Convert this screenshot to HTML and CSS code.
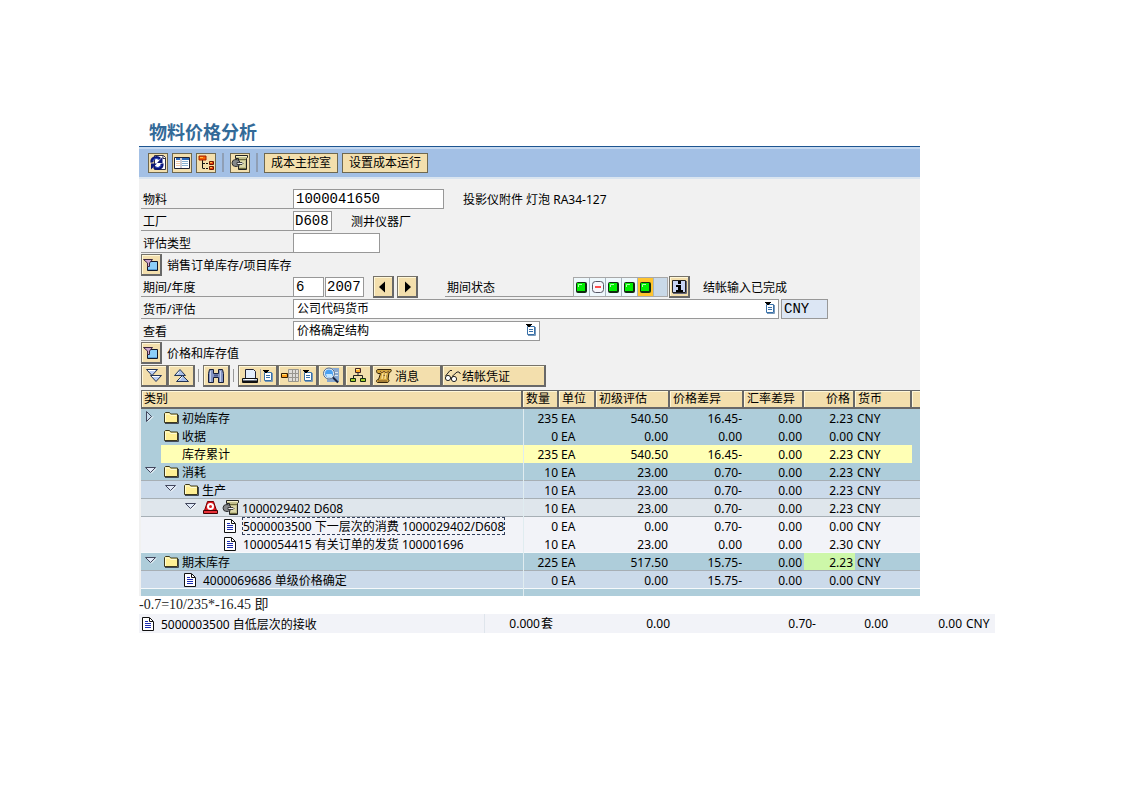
FILE: index.html
```html
<!DOCTYPE html>
<html lang="zh-CN">
<head>
<meta charset="utf-8">
<title>物料价格分析</title>
<link rel="stylesheet" href="styles.css">
</head>
<body>
<svg class="sprite" aria-hidden="true">
  <symbol id="refresh" viewBox="0 0 18 18"><path d="M5.500 1.500h9l2 2v12h-11z" fill="#fff" stroke="#334"/><path d="M14 2v2.500h2" fill="none" stroke="#334"/><path d="M3 8.500C2 4 8 2 11 5" fill="none" stroke="#0a1678" stroke-width="3"/><path d="M13.500 3v6H8z" fill="#0a1678"/><path d="M13 9.500c1 4.500-5 6.500-8 3.500" fill="none" stroke="#0a1678" stroke-width="3"/><path d="M2 15.500v-6h6z" fill="#0a1678"/><path d="M4 7c1-3 4-3 6-1.500M12 11c-1 3-4 3-6 1.500" fill="none" stroke="#4868e0"/></symbol>
  <symbol id="layout" viewBox="0 0 18 18"><path d="M1.500 3.500h15v11h-15z" fill="#fff" stroke="#223"/><path d="M3 5h4M9 5h7" stroke="#2a68b8" stroke-width="2"/><path d="M8 4v10" stroke="#99a"/><path d="M3 7.500h4M3 9.500h4M3 11.500h4" stroke="#f0c8a8"/><path d="M9 7.500h6M9 9.500h6M9 11.500h6" stroke="#8ab0d0"/></symbol>
  <symbol id="tree" viewBox="0 0 18 18"><path d="M5.500 5v9.500" stroke="#111"/><path d="M6 9.500h6M6 14.500h6" stroke="#111" stroke-dasharray="2 1"/><path d="M2 2h7v4H2z" fill="#f86000" stroke="#a02000"/><path d="M12.500 7.500h4v3h-4zM12.500 12.500h4v3h-4z" fill="#e83810" stroke="#701800"/><path d="M3 3.500h3M13 8.500h2M13 13.500h2" stroke="#ffc040"/></symbol>
  <symbol id="machine" viewBox="0 0 18 18"><path d="M4.500 1.500h12v2l-1 1v11h-8v-11h-3z" fill="#c4c08c" stroke="#222"/><path d="M5 2.500h11" stroke="#f4f0c8"/><path d="M8 5.500h7M8 14.500h7" stroke="#6c6a3c"/><path d="M9 7h5v6H9z" fill="#dcd8a8"/><ellipse cx="5" cy="9" rx="4" ry="3.500" fill="#b8bcc0" stroke="#222"/><path d="M3 6.500v5M5 6v6M7 6.500v5" stroke="#555"/><path d="M6 8.500h5l1 1-1 1H6z" fill="#f4f4f4" stroke="#222" stroke-width=".8"/></symbol>
  <symbol id="filter" viewBox="0 0 18 18"><path d="M5.500 5.500h10v9h-10z" fill="#8ccef8" stroke="#10182c"/><path d="M6 13.500h9" stroke="#5aa0d8"/><path d="M1.500 3.500h9L7.500 7v3.500h-2V7z" fill="#d0a8d0" stroke="#3b253e"/></symbol>
  <symbol id="prev" viewBox="0 0 18 18"><path d="M11 3.500v11L5 9z" fill="#000"/></symbol>
  <symbol id="next" viewBox="0 0 18 18"><path d="M7 3.500v11L13 9z" fill="#000"/></symbol>
  <symbol id="info" viewBox="0 0 18 18"><path d="M2.500 2.500h13v12h-13z" fill="#c8d5f6" stroke="#222"/><path d="M3 15.500h13.500V3" fill="none" stroke="#667"/><path d="M8 3h3v3H8zM6 7h5v5h2v2H6v-2h2V9H6z" fill="#000"/></symbol>
  <symbol id="list" viewBox="0 0 12 14"><path d="M2.500 3.500h7v8h-7z" fill="#fff" stroke="#3870a8"/><path d="M10.500 4v8.500H3" fill="none" stroke="#7898b8"/><path d="M4 6.500h4M4 8.500h4" stroke="#3870a8"/><path d="M1 1h6v1H6v1H5v1H3V3H2V2H1z" fill="#000"/></symbol>
  <symbol id="down2" viewBox="0 0 18 18"><path d="M1.500 2.500h11l-5.500 6zM5.500 8.500h11l-5.500 6z" fill="#b8ccf4" stroke="#223355"/><path d="M3 3.500h7M7 9.500h7" stroke="#fff"/></symbol>
  <symbol id="up2" viewBox="0 0 18 18"><path d="M2.500 8.500h11l-5.500-6zM4.500 14.500h12l-6-6z" fill="#a8bee8" stroke="#223355"/><path d="M7 5l-2 2.500M10 10l-3 3.500" stroke="#fff"/></symbol>
  <symbol id="find" viewBox="0 0 18 18"><path d="M1.500 15.500v-9l1-4h4v4h5v-4h4l1 4v9h-5v-5h-5v5z" fill="#8494c4" stroke="#151c38"/><path d="M3.500 4v11M13.500 4v11" stroke="#c8d4ec"/><path d="M7 8.500h4" stroke="#505c88" stroke-width="2"/></symbol>
  <symbol id="print" viewBox="0 0 18 18"><path d="M4.500 2.500h8l2 2v7h-10z" fill="#e4eefc" stroke="#223"/><path d="M1.500 11.500h15v4h-15z" fill="#c8d8f0" stroke="#111"/><path d="M2 14.500h14" stroke="#111" stroke-width="2"/><path d="M4 12.500h9" stroke="#fff"/></symbol>
  <symbol id="grid" viewBox="0 0 18 18"><path d="M7.500 2.500h10v12h-10zM8 6.500h9M8 10.500h9M11.500 3v12M14.500 3v12" fill="#dedcd8" stroke="#98968f"/><path d="M.5 6.500h6v4h-6z" fill="#ffa01e" stroke="#331c00"/><path d="M1 7.500h4" stroke="#ffe070"/></symbol>
  <symbol id="detail" viewBox="0 0 18 18"><path d="M5 1h12v14H5z" fill="#88a8d0"/><path d="M12 5.500h4M12 8.500h4" stroke="#dce8f4"/><circle cx="7" cy="6.500" r="5" fill="#4aa0f0" stroke="#e8f0f8" stroke-width="2"/><circle cx="7" cy="6.500" r="5.500" fill="none" stroke="#304868" stroke-width=".8"/><path d="M4 7h6v3H5z" fill="#c8e8ff"/><path d="M11 10.500l5 5" stroke="#182440" stroke-width="2"/></symbol>
  <symbol id="hier" viewBox="0 0 18 18"><path d="M9 5v4M4.500 12V8.500h9V12" fill="none" stroke="#222"/><path d="M6.500 1.500h5v4h-5z" fill="#ffad28" stroke="#422"/><path d="M1.500 11.500h5v3h-5zM11.500 11.500h5v3h-5z" fill="#a2d030" stroke="#132b12"/><path d="M7 2.500h3" stroke="#fff0a0"/></symbol>
  <symbol id="message" viewBox="0 0 18 18"><path d="M3 2.500h13c1 2-1 3-2 3l-1 7c2 0 1 3-1 3H2.500c-2-1-1-3 1-3l2-6H3c-2-1-2-4 0-4z" fill="#d5a840" stroke="#33240b"/><path d="M5 4l2 2 2-2 2 2 3-2M7 8l5 1M3 14h9" fill="none" stroke="#79542b"/><path d="M8 6l-1 6M11 6l-1 6" stroke="#f8df94" stroke-width="1.500"/></symbol>
  <symbol id="glasses" viewBox="0 0 18 18"><circle cx="4" cy="11" r="2.600" fill="#fff" stroke="#222"/><circle cx="10" cy="12" r="2.600" fill="#fff" stroke="#222"/><path d="M1.500 9L6 3.500h2M6.500 11l1-1M8 9.500l5-4.500h2l1.500 2" fill="none" stroke="#222"/></symbol>
  <symbol id="folder" viewBox="0 0 18 18"><path d="M3 14.500h13.500V6" fill="none" stroke="#404858"/><path d="M2.500 13.500v-9l1-1h4l1 1.500h7v8.500z" fill="#ffef94" stroke="#3c381c"/><path d="M3.500 13V5h4l1 1.500h6" fill="none" stroke="#fffcd4"/></symbol>
  <symbol id="doc" viewBox="0 0 18 18"><path d="M2.500 2.500h7l4 4v9h-11z" fill="#fff" stroke="#111"/><path d="M9.500 3v3.500H13" fill="none" stroke="#111"/><path d="M5 6.500h3M5 8.500h6M5 10.500h6M5 12.500h6" stroke="#1d2cb0"/></symbol>
  <symbol id="alarm" viewBox="0 0 18 18"><path d="M5.500 2.500h6l3 9h-12z" fill="#e01820" stroke="#700"/><path d="M1.500 11.500h14v3h-14z" fill="#e83038" stroke="#400"/><circle cx="8.500" cy="7.500" r="2.500" fill="#d22" stroke="#fff" stroke-width="2"/></symbol>
  <symbol id="open" viewBox="0 0 12 12"><path d="M.5 2.500h10l-5 5z" fill="#e0eaf8" stroke="#42465c"/><path d="M6 8.500l5-5" stroke="#fff"/></symbol>
  <symbol id="closed" viewBox="0 0 12 12"><path d="M1.500.5v10l5-5z" fill="#c7ddec" stroke="#42465c"/><path d="M3 10.500l5-5" stroke="#fff"/></symbol>
  <symbol id="green" viewBox="0 0 14 18"><rect x="1" y="4" width="11" height="11" rx="2" fill="#102b10"/><rect x="2" y="5" width="8" height="8" fill="#00f000"/><path d="M3.500 9V6.500H7" fill="none" stroke="#adffad"/></symbol>
  <symbol id="minus" viewBox="0 0 14 18"><rect x="1.500" y="3.500" width="11" height="11" rx="3" fill="#f7f7fc" stroke="#555664"/><path d="M4 9h6" stroke="#ff4c4c" stroke-width="2"/></symbol>
</svg>

<main class="document">
  <section class="app">
    <h1 class="title">物料价格分析</h1>
    <div class="appbar">
      <button class="flat" aria-label="刷新"><svg><use href="#refresh"/></svg></button>
      <button class="flat" aria-label="布局"><svg><use href="#layout"/></svg></button>
      <button class="flat" aria-label="层次"><svg><use href="#tree"/></svg></button>
      <span class="bar-sep"></span>
      <button class="flat" aria-label="物料"><svg><use href="#machine"/></svg></button>
      <span class="bar-sep"></span>
      <button class="flat text">成本主控室</button>
      <button class="flat text">设置成本运行</button>
    </div>

    <form class="form">
      <div class="row">
        <label class="label" for="material">物料</label>
        <input class="field w-material" id="material" value="1000041650">
        <span class="note">投影仪附件 灯泡 RA34-127</span>
      </div>
      <div class="row">
        <label class="label" for="plant">工厂</label>
        <input class="field w-code" id="plant" value="D608">
        <span class="note">测井仪器厂</span>
      </div>
      <div class="row">
        <label class="label" for="valtype">评估类型</label>
        <input class="field w-type" id="valtype" value="">
      </div>
      <div class="row">
        <button type="button" class="raised square" aria-label="销售订单库存/项目库存"><svg><use href="#filter"/></svg></button>
        <span class="caption">销售订单库存/项目库存</span>
      </div>
      <div class="row">
        <label class="label" for="period">期间/年度</label>
        <input class="field w-period" id="period" value="6">
        <input class="field w-code year" aria-label="年度" value="2007">
        <span class="pager">
          <button type="button" class="raised square" aria-label="上一期间"><svg><use href="#prev"/></svg></button>
          <button type="button" class="raised square" aria-label="下一期间"><svg><use href="#next"/></svg></button>
        </span>
        <span class="label status-label">期间状态</span>
        <span class="status">
          <span class="lamp"><svg><use href="#green"/></svg></span>
          <span class="lamp"><svg><use href="#minus"/></svg></span>
          <span class="lamp"><svg><use href="#green"/></svg></span>
          <span class="lamp"><svg><use href="#green"/></svg></span>
          <span class="lamp current"><svg><use href="#green"/></svg></span>
        </span>
        <button type="button" class="raised square" aria-label="信息"><svg><use href="#info"/></svg></button>
        <span class="status-text">结帐输入已完成</span>
      </div>
      <div class="row">
        <label class="label" for="currency">货币/评估</label>
        <span class="picker wide"><select id="currency"><option>公司代码货币</option></select><svg><use href="#list"/></svg></span>
        <input class="field readonly" aria-label="货币" value="CNY" readonly>
      </div>
      <div class="row">
        <label class="label" for="view">查看</label>
        <span class="picker view"><select id="view"><option>价格确定结构</option></select><svg><use href="#list"/></svg></span>
      </div>
      <div class="row">
        <button type="button" class="raised square" aria-label="价格和库存值"><svg><use href="#filter"/></svg></button>
        <span class="caption">价格和库存值</span>
      </div>
    </form>

    <div class="tools">
      <button class="raised tool" aria-label="展开"><svg><use href="#down2"/></svg></button>
      <button class="raised tool" aria-label="折叠"><svg><use href="#up2"/></svg></button>
      <span class="tool-sep"></span>
      <button class="raised tool" aria-label="查找"><svg><use href="#find"/></svg></button>
      <span class="tool-sep"></span>
      <button class="raised menu" aria-label="打印"><svg><use href="#print"/></svg><i></i><svg class="small"><use href="#list"/></svg></button>
      <button class="raised menu" aria-label="列格式"><svg><use href="#grid"/></svg><i></i><svg class="small"><use href="#list"/></svg></button>
      <button class="raised tool" aria-label="明细"><svg><use href="#detail"/></svg></button>
      <button class="raised tool" aria-label="层次结构"><svg><use href="#hier"/></svg></button>
      <button class="raised worded message"><svg><use href="#message"/></svg><span>消息</span></button>
      <button class="raised worded voucher"><svg><use href="#glasses"/></svg><span>结帐凭证</span></button>
    </div>

    <table class="grid">
      <colgroup><col><col class="c-qty"><col class="c-unit"><col class="c-amount"><col class="c-amount"><col class="c-fx"><col class="c-price"><col class="c-cur"><col class="c-end"></colgroup>
      <thead>
        <tr><th>类别</th><th>数量</th><th>单位</th><th>初级评估</th><th>价格差异</th><th>汇率差异</th><th class="right">价格</th><th>货币</th><th></th></tr>
      </thead>
      <tbody>
        <tr class="teal"><td><div class="node"><svg class="arrow"><use href="#closed"/></svg><svg><use href="#folder"/></svg><span>初始库存</span></div></td><td>235</td><td>EA</td><td>540.50</td><td>16.45-</td><td>0.00</td><td>2.23</td><td>CNY</td><td></td></tr>
        <tr class="teal"><td><div class="node"><span class="arrow"></span><svg><use href="#folder"/></svg><span>收据</span></div></td><td>0</td><td>EA</td><td>0.00</td><td>0.00</td><td>0.00</td><td>0.00</td><td>CNY</td><td></td></tr>
        <tr class="teal total"><td><div class="node"><span>库存累计</span></div></td><td>235</td><td>EA</td><td>540.50</td><td>16.45-</td><td>0.00</td><td>2.23</td><td>CNY</td><td></td></tr>
        <tr class="teal ruled"><td><div class="node"><svg class="arrow"><use href="#open"/></svg><svg><use href="#folder"/></svg><span>消耗</span></div></td><td>10</td><td>EA</td><td>23.00</td><td>0.70-</td><td>0.00</td><td>2.23</td><td>CNY</td><td></td></tr>
        <tr class="blue ruled"><td><div class="node level1"><svg class="arrow"><use href="#open"/></svg><svg><use href="#folder"/></svg><span>生产</span></div></td><td>10</td><td>EA</td><td>23.00</td><td>0.70-</td><td>0.00</td><td>2.23</td><td>CNY</td><td></td></tr>
        <tr class="grey ruled"><td><div class="node level2"><svg class="arrow"><use href="#open"/></svg><svg><use href="#alarm"/></svg><svg><use href="#machine"/></svg><span>1000029402 D608</span></div></td><td>10</td><td>EA</td><td>23.00</td><td>0.70-</td><td>0.00</td><td>2.23</td><td>CNY</td><td></td></tr>
        <tr class="pale"><td><div class="node level3"><span class="arrow"></span><svg><use href="#doc"/></svg><span class="item focus">5000003500 下一层次的消费 1000029402/D608</span></div></td><td>0</td><td>EA</td><td>0.00</td><td>0.70-</td><td>0.00</td><td>0.00</td><td>CNY</td><td></td></tr>
        <tr class="pale lined"><td><div class="node level3"><span class="arrow"></span><svg><use href="#doc"/></svg><span class="item">1000054415 有关订单的发货 100001696</span></div></td><td>10</td><td>EA</td><td>23.00</td><td>0.00</td><td>0.00</td><td>2.30</td><td>CNY</td><td></td></tr>
        <tr class="teal ruled"><td><div class="node"><svg class="arrow"><use href="#open"/></svg><svg><use href="#folder"/></svg><span>期末库存</span></div></td><td>225</td><td>EA</td><td>517.50</td><td>15.75-</td><td>0.00</td><td class="good">2.23</td><td>CNY</td><td></td></tr>
        <tr class="blue lined"><td><div class="node level1"><span class="arrow"></span><svg><use href="#doc"/></svg><span class="item">4000069686 单级价格确定</span></div></td><td>0</td><td>EA</td><td>0.00</td><td>15.75-</td><td>0.00</td><td>0.00</td><td>CNY</td><td></td></tr>
        <tr class="teal tail"><td></td><td></td><td></td><td></td><td></td><td></td><td></td><td></td><td></td></tr>
      </tbody>
    </table>
  </section>

  <p class="formula">-0.7=10/235*-16.45 即</p>

  <table class="strip">
    <colgroup><col><col class="s-qty"><col class="s-unit"><col class="s-first"><col class="s-diff"><col class="s-fx"><col class="s-price"><col class="s-cur"></colgroup>
    <tbody>
      <tr><td><div class="node"><svg><use href="#doc"/></svg><span class="item">5000003500 自低层次的接收</span></div></td><td>0.000</td><td class="left">套</td><td>0.00</td><td>0.70-</td><td>0.00</td><td>0.00</td><td>CNY</td></tr>
    </tbody>
  </table>
</main>
</body>
</html>
```
FILE: styles.css
```css
* { box-sizing: border-box; }

body {
  margin: 0;
  background: #fff;
  color: #000;
  font: 12px/18px "Noto Sans", "Noto Sans CJK SC", sans-serif;
}

button, input, select { margin: 0; color: inherit; font: inherit; }
svg { display: block; flex: none; width: 18px; height: 18px; }
.sprite { position: absolute; width: 0; height: 0; }

.document { padding: 118px 127px 40px 139px; }
.app { margin-right: 75px; background: #f1f1f1; }

.title {
  margin: 0;
  padding-left: 10px;
  height: 29px;
  border-bottom: 1px solid #1d5590;
  background: #fff;
  color: #336a98;
  font: bold 18px/26px "Noto Sans CJK SC", sans-serif;
}

.appbar {
  display: flex;
  align-items: center;
  gap: 4px;
  height: 32px;
  padding: 0 0 1px 9px;
  border-top: 2px solid #c6d9f0;
  border-bottom: 2px solid #dae5f0;
  background: #a3c0e5;
}

.flat {
  display: flex;
  align-items: center;
  justify-content: center;
  width: 20px;
  height: 20px;
  padding: 0;
  border: 1px solid #6e6850;
  background: #f3dfad;
}
.flat.text { width: auto; padding: 0 6px; }
.bar-sep { width: 2px; height: 19px; margin: 0 2px; background: #8f9fb5; }

.form { padding: 9px 0 0 2px; }
.row { display: flex; align-items: center; height: 22px; }
.label {
  flex: none;
  width: 152px;
  height: 20px;
  padding-left: 2px;
  border-bottom: 1px solid #989898;
  line-height: 22px;
}
.field {
  flex: none;
  height: 20px;
  padding: 0 2px;
  border: 1px solid #989898;
  border-radius: 0;
  background: #fff;
  font: 14px/18px "Liberation Mono", "Noto Sans CJK SC", monospace;
}
.w-material { width: 151px; }
.w-code { width: 39px; padding: 0 1px; }
.w-type { width: 87px; }
.w-period { width: 31px; }
.year { margin-left: 1px; }
.readonly { width: 47px; margin: 0 92px 0 2px; background: #dce6f4; }
.note, .caption, .status-text { padding-top: 2px; }
.note { margin-left: 19px; }
.caption { margin-left: 5px; }

.raised {
  display: flex;
  flex: none;
  align-items: center;
  justify-content: center;
  height: 22px;
  padding: 0;
  border: 1px solid #77736a;
  border-right: 2px solid #686868;
  border-bottom: 2px solid #686868;
  background: #f3dfad;
  box-shadow: inset 1px 1px #fff7d8;
}
.square { width: 21px; }

.pager { display: flex; gap: 3px; margin: 0 27px 0 9px; }
.status-label { width: 128px; }
.status {
  display: flex;
  flex: none;
  width: 95px;
  height: 20px;
  margin-right: 1px;
  border: 1px solid #a8a8a8;
  background: #c9d9e8;
}
.lamp { width: 16px; padding-left: 1px; border-right: 1px solid #a8b4be; background: #eef8fc; }
.lamp svg { width: 14px; }
.current { background: #ffc42e; }
.status-text { margin-left: 13px; }

.picker { position: relative; display: flex; height: 20px; }
.picker.wide { flex: 1; }
.picker.view { width: 247px; }
.picker select {
  width: 100%;
  height: 20px;
  padding: 0 20px 0 3px;
  border: 1px solid #989898;
  border-radius: 0;
  background: #fff;
  appearance: none;
}
.picker svg { position: absolute; top: 2px; right: 3px; width: 12px; height: 14px; pointer-events: none; }

.tools { display: flex; padding: 1px 0 3px 2px; }
.tool { width: 27px; }
.tool-sep { width: 1px; height: 13px; margin: 4px 4px 0 3px; background: #999; }
.menu { width: 40px; gap: 1px; }
.menu i { width: 1px; height: 13px; background: #aaa; }
.raised .small { width: 12px; height: 14px; }
.worded { justify-content: flex-start; padding-left: 2px; }
.worded span { padding-top: 2px; }
.message { width: 70px; gap: 2px; }
.voucher { width: 104px; padding-left: 1px; }

.grid, .strip { border-collapse: separate; border-spacing: 0; table-layout: fixed; }
.grid { width: calc(100% - 2px); margin-left: 2px; }
.grid td, .grid th { padding: 0; overflow: hidden; white-space: nowrap; }
.c-qty { width: 36px; }
.c-unit { width: 37px; }
.c-amount { width: 74px; }
.c-fx { width: 60px; }
.c-price { width: 51px; }
.c-cur { width: 57px; }
.c-end { width: 8px; }

.grid th {
  height: 19px;
  padding-left: 3px;
  border-top: 1px solid #686868;
  border-bottom: 2px solid #686868;
  border-right: 2px solid #686868;
  background: #f3dfad;
  box-shadow: inset 1px 1px #fff7d8;
  font-weight: normal;
  line-height: 16px;
  text-align: left;
}
.grid th:first-child { padding-left: 2px; border-left: 1px solid #686868; }
.grid th:last-child { border-right: 0; }
.grid th.right { padding-right: 3px; text-align: right; }

.grid td { height: 18px; padding-top: 1px; line-height: 17px; text-align: right; }
.grid td:nth-child(2) { border-left: 1px solid #e0ecf0; padding-right: 1px; }
.grid td:nth-child(3), .grid td:nth-child(8) { padding-left: 2px; text-align: left; }
.grid td:nth-child(4), .grid td:nth-child(5), .grid td:nth-child(6), .grid td:nth-child(7) { padding-right: 2px; }
.grid td:first-child { padding-top: 0; }
.teal td { background: #aecdda; }
.blue td { background: #cbdaea; }
.grey td { background: #dfe6ec; }
.pale td { background: #f2f3f8; }
.ruled td { box-shadow: inset 0 -1px #a7afb5; }
.lined td { box-shadow: inset 0 -1px #f6f9fb; }
.total td { background: #ffffb5; }
.total td:first-child { padding-left: 20px; background: linear-gradient(#ffffb5, #ffffb5) content-box, #aecdda; }
.total td:last-child { background: #aecdda; }
.grid .good { background: #cdf7a9; }
.grid .tail td { height: 7px; padding: 0; }

.node { display: flex; align-items: flex-start; gap: 2px; height: 18px; padding-left: 4px; }
.node span { padding-top: 1px; line-height: 17px; }
.node .arrow { flex: none; width: 12px; height: 12px; margin: 2px 3px 0 0; }
.total .node { padding-left: 21px; }
.level1 { padding-left: 24px; }
.level2 { padding-left: 44px; }
.level3 { padding-left: 64px; }
.node .item { padding-left: 1px; }
.focus { padding-right: 1px; outline: 1px dashed #32405c; outline-offset: -1px; }

.formula {
  margin: 0;
  height: 18px;
  color: #222;
  font: 14px/18px "Liberation Serif", "Noto Sans CJK SC", serif;
}

.strip { width: 100%; background: #f2f3f8; }
.strip td { height: 19px; padding: 0; text-align: right; white-space: nowrap; }
.strip td:nth-child(2) { border-left: 1px solid #dfe5ec; }
.strip .left { padding-left: 1px; text-align: left; }
.strip td:last-child { padding-left: 4px; text-align: left; }
.strip .node { padding-left: 1px; }
.s-qty { width: 56px; }
.s-unit { width: 30px; }
.s-first { width: 100px; }
.s-diff { width: 146px; }
.s-fx { width: 72px; }
.s-price { width: 74px; }
.s-cur { width: 33px; }
```
